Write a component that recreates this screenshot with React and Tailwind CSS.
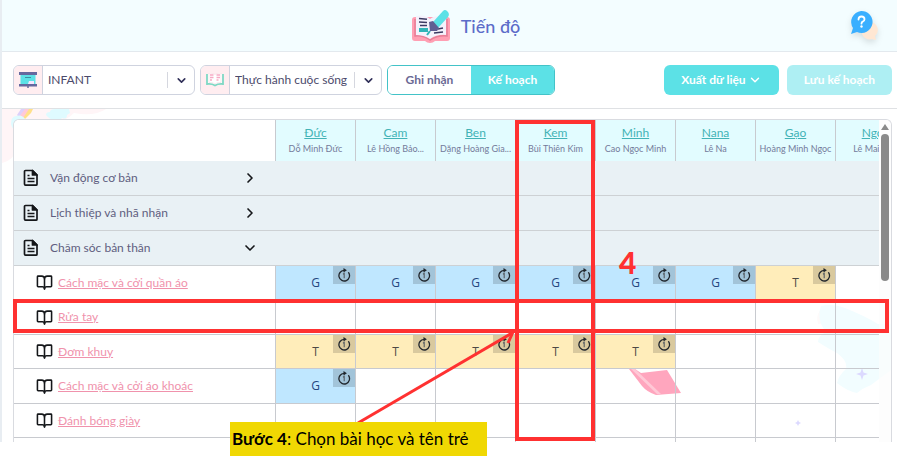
import { ChevronDown, ChevronRight, BookOpen } from "lucide-react"

const children = [
  { nick: "Đức", name: "Dỗ Minh Đức" },
  { nick: "Cam", name: "Lê Hồng Bảo..." },
  { nick: "Ben", name: "Dặng Hoàng Gia..." },
  { nick: "Kem", name: "Bùi Thiên Kim" },
  { nick: "Minh", name: "Cao Ngọc Minh" },
  { nick: "Nana", name: "Lê Na" },
  { nick: "Gạo", name: "Hoàng Minh Ngọc" },
  { nick: "Ngọc", name: "Lê Mai Anh" }
]

const groups = [
  { title: "Vận động cơ bản", open: false },
  { title: "Lịch thiệp và nhã nhặn", open: false },
  { title: "Chăm sóc bản thân", open: true }
]

const lessons = [
  { title: "Cách mặc và cởi quần áo", marks: ["G", "G", "G", "G", "G", "G", "T", ""] },
  { title: "Rửa tay", marks: ["", "", "", "", "", "", "", ""] },
  { title: "Đơm khuy", marks: ["T", "T", "T", "T", "T", "", "", ""] },
  { title: "Cách mặc và cởi áo khoác", marks: ["G", "", "", "", "", "", "", ""] },
  { title: "Đánh bóng giày", marks: ["", "", "", "", "", "", "", ""] }
]

const markColors = {
  G: "bg-[#bfe7ff] text-[#24467f]",
  T: "bg-[#ffedba] text-[#4d4a45]"
}

const LogoIcon = () => (
  <svg width="40" height="34" viewBox="0 0 40 34" aria-hidden="true">
    <path d="M1 11q0-3 3-3h32q3 0 3 3v18q0 3-3 3H24q-2 2-5 2t-5-2H4q-3 0-3-3z" fill="#ff9fb3" />
    <path d="M4 10v17q8-1 15 4 8-5 17-4V10" fill="none" stroke="#e77f98" strokeWidth="1.500" />
    <path d="M5 7q9-2 14 3v20q-6-4-14-4zM19 10q5-4 16-3v19q-9-1-16 4z" fill="#f4f2fc" />
    <path d="M8 9.500l8 .8M8 13l8 .5M9 16.500h7M27 20l5-1M23 24l9-1" stroke="#3c3b63" strokeWidth="1.500" />
    <path d="M8 19h9v4H8z" fill="#2fb5b8" />
    <path d="M22 13L32 2q2-2 4.500.5T37 8L27 19z" fill="#5ce1e6" />
    <path d="M18 13l4-1 6 7-2 3h-7z" fill="#5f5e92" />
    <path d="M19 22l-3 4" stroke="#2fb5b8" strokeWidth="2" />
  </svg>
)

const HelpIcon = () => (
  <svg width="32" height="32" viewBox="0 0 32 32" className="drop-shadow-md" aria-hidden="true">
    <path d="M20 12a8 8 0 0 1 6 14l1 4-4-1a8 8 0 0 1-10-5z" fill="#ffe7d3" />
    <path d="M12 1a11 11 0 1 1-4 21l-6 2 2-6A11 11 0 0 1 12 1z" fill="#3aafff" />
    <path d="M9.500 9.500q0-3 3-3t3 2.700q0 1.800-1.800 2.500-1.200.5-1.200 2" fill="none" stroke="#fff" strokeWidth="1.800" strokeLinecap="round" />
    <circle cx="12.500" cy="16.500" r="1.200" fill="#fff" />
  </svg>
)

const BoardIcon = () => (
  <svg width="18" height="16" viewBox="0 0 18 16" aria-hidden="true">
    <path d="M1.500 2h15v10h-15z" fill="#5ce1e6" />
    <path d="M10 9h5v3H9z" fill="#f4e6ff" />
    <path d="M6 5.500h6" stroke="#3e8fa0" />
    <path d="M0 0h18v3H0zM0 12h18v2.500H0z" fill="#65689e" />
    <path d="M9 14v2" stroke="#65689e" strokeWidth="1.500" />
  </svg>
)

const SubjectIcon = () => (
  <svg width="18" height="14" viewBox="0 0 18 14" aria-hidden="true">
    <path d="M1 1v10q5-.5 8 1.500 3-2 8-1.500V1" fill="#fff" stroke="#7fd8c4" strokeWidth="1.800" />
    <path d="M3 0q4 0 6 1.500Q11 0 15 0v9.500Q11 9 9 11 7 9 3 9.500z" fill="#fff" stroke="#f3dbe3" strokeWidth=".6" />
    <path d="M4 2h3.500M4 4.500h3.500M4 7h2M10.500 2H14M10.500 4.500H14M10.500 7h2" stroke="#f7a9c4" strokeWidth="1.400" />
  </svg>
)

const DocIcon = () => (
  <svg width="16" height="18" viewBox="0 0 16 18" fill="none" stroke="#15171a" strokeWidth="1.700" strokeLinejoin="round" aria-hidden="true">
    <path d="M9.500 1.500h-7q-1 0-1 1v12.500q0 1.200 1 1.200h10.500q1 0 1-1V6z" />
    <path d="M9.500 1.500V6H14z" fill="#15171a" />
    <path d="M4.500 6.500h2M4.500 9.500h7M4.500 12.500h7" strokeWidth="1.400" />
  </svg>
)

const RepeatBadge = () => (
  <span className="absolute right-0 top-0 flex h-[18px] w-[22px] items-center justify-center bg-black/15">
    <svg width="14" height="14" viewBox="0 0 14 14" fill="none" stroke="#20262c" aria-hidden="true">
      <path d="M7 2.400a5.300 5.300 0 1 0 4.600 2.300" strokeWidth="1.300" strokeLinecap="round" />
      <path d="M6.500 0l3.400 2.300-3.400 2.300z" fill="#20262c" stroke="none" />
      <path d="M6 6.200l1.200-.8v4.800" stroke="#555c63" strokeWidth="1.100" />
    </svg>
  </span>
)

const SelectBox = ({ id, label, value, icon }) => (
  <div className="relative flex h-[30px] w-[182px] overflow-hidden rounded-md border border-[#cfd3df] bg-white">
    <label htmlFor={id} aria-label={label} className="flex w-[29px] shrink-0 items-center justify-center border-r border-[#cfd3df] bg-[#ffedf0]">
      {icon}
    </label>
    <select id={id} className="min-w-0 flex-1 appearance-none bg-transparent pl-[5px] text-xs text-[#4b4a6b] outline-none">
      <option>{value}</option>
    </select>
    <span className="pointer-events-none absolute inset-y-1.5 right-0 flex w-[27px] items-center justify-center border-l border-[#d5d7df]">
      <ChevronDown size={13} strokeWidth={3} className="text-[#33325a]" />
    </span>
  </div>
)

const Header = () => (
  <header className="grid h-[52px] grid-cols-[1fr_auto_1fr] items-center border-b border-[#e3e9ee] bg-[#f3fdff] pl-12 pr-4">
    <span />
    <div className="flex items-center gap-2.5">
      <LogoIcon />
      <h1 className="text-lg font-medium text-[#5c6cc9]">Tiến độ</h1>
    </div>
    <button type="button" aria-label="Trợ giúp" className="justify-self-end">
      <HelpIcon />
    </button>
  </header>
)

const Toolbar = () => (
  <div className="flex h-[57px] items-center gap-[5px] border-b border-[#dfe1e4] bg-white pl-[11px] pr-[5px]">
    <SelectBox id="class" label="Lớp" value="INFANT" icon={<BoardIcon />} />
    <SelectBox id="subject" label="Lĩnh vực" value="Thực hành cuộc sống" icon={<SubjectIcon />} />
    <div className="flex h-[30px] w-[168px] overflow-hidden rounded-md border border-[#43c3c8] text-xs font-bold">
      <button type="button" className="flex-1 bg-white text-[#6a6994]">Ghi nhận</button>
      <button type="button" className="flex-1 bg-[#5ce1e6] text-white">Kế hoạch</button>
    </div>
    <div className="ml-auto flex gap-2 text-xs font-bold text-white">
      <button type="button" className="flex h-[30px] w-[115px] items-center justify-center gap-0.5 rounded-md bg-[#5ce1e6]">
        Xuất dữ liệu
        <ChevronDown size={14} strokeWidth={2.5} />
      </button>
      <button type="button" className="h-[30px] w-[105px] rounded-md bg-[#aeeff3]">Lưu kế hoạch</button>
    </div>
  </div>
)

// pale cloud and rainbow behind the top left corner of the table
const CloudArt = () => (
  <svg width="110" height="60" viewBox="0 0 110 60" className="absolute left-0 top-0" aria-hidden="true">
    <path d="M0 0h104q-12 8-32 4-8 8-24 12L12 46q-4 6-12 8z" fill="#fff5f7" />
    <path d="M15 6l4-6h6l-8 8z" fill="#dcd0fa" />
    <path d="M17 8l6-8h5l-6 9z" fill="#ffc9d8" />
    <path d="M21 9l6-9h4l-2 4-6 6z" fill="#ffe08a" />
    <path d="M9 14q0-6 5-7 6-2 9 3 4 1 2 6l-12 6q-4-4-4-8z" fill="#dffbff" />
    <path d="M44 6q0-3 4-3 0-3 5-3h14l1 4-3 2q0 5-5 3-3 5-6 1-5 2-10-4z" fill="#dffbff" />
  </svg>
)

// shapes that show through the empty cells
const TableArt = () => (
  <svg width="278" height="322" viewBox="0 0 278 322" className="absolute right-0 top-0" aria-hidden="true">
    <path d="M205 204q-4-16 14-19l6 14-10 4z" fill="#fefafa" />
    <path d="M208 186q12-3 24 2 20 8 33 16h19v42q-14 10-26 19-8 3-14 8-10-2-20-10 2-8 9-14 2-8-9-16-8-4-19-11 0-6 8-10-10-12-5-26z" fill="#f2fdff" />
    <path d="M16 249h6l6 4 26-3 14 23-25 2q-9-3-14-9z" fill="#ffa6be" />
    <path d="M18 249h4l26 25h-4z" fill="#ffc8d6" />
    <path d="M249 248l1.500 4.500 4.500 1.500-4.500 1.500-1.500 4.500-1.500-4.500-4.500-1.500 4.500-1.500zM185 300l1 2 2 1-2 1-1 2-1-2-2-1 2-1z" fill="#dcd9ff" />
  </svg>
)

const ProgressTable = () => (
  <table className="relative w-[902px] table-fixed border-separate border-spacing-0">
    <colgroup>
      <col className="w-[262px]" />
      {children.map((child) => (
        <col key={child.nick} className="w-20" />
      ))}
    </colgroup>
    <thead>
      <tr className="h-[41px]">
        <th aria-label="Bài học" className="border-r border-[#c8cacf] bg-white p-0" />
        {children.map((child) => (
          <th key={child.nick} className="whitespace-nowrap border-r border-[#c8cacf] bg-[#e2fcff] p-0 font-normal">
            <a href="#" className="block text-xs leading-4 text-[#43b3b6] underline">{child.nick}</a>
            <span className="block text-[9px] leading-4 text-[#747b9b]">{child.name}</span>
          </th>
        ))}
      </tr>
    </thead>
    <tbody>
      {groups.map((group) => (
        <tr key={group.title} className="h-[35px] bg-[#e9f1f5]">
          <td className="border-b border-[#cdd1d4] p-0">
            <button type="button" aria-expanded={group.open} className="flex w-full items-center pl-[9px] pr-[18px] text-xs text-[#5f5e80]">
              <DocIcon />
              <span className="ml-[11px] flex-1 text-left">{group.title}</span>
              {group.open ? (
                <ChevronDown size={16} strokeWidth={2.5} className="text-[#15171a]" />
              ) : (
                <ChevronRight size={16} strokeWidth={2.5} className="text-[#15171a]" />
              )}
            </button>
          </td>
          <td colSpan={children.length} className="border-b border-[#cdd1d4] p-0" />
        </tr>
      ))}
    </tbody>
    <tbody>
      {lessons.map((lesson) => (
        <tr key={lesson.title} className="odd:h-[34px] even:h-[35px]">
          <td className="border-b border-r border-[#c8cacf] bg-white p-0">
            <div className="flex items-center gap-[5px] pl-[22px]">
              <BookOpen size={17} strokeWidth={2.2} className="text-[#15171a]" />
              <a href="#" className="text-xs text-[#f092ac] underline">{lesson.title}</a>
            </div>
          </td>
          {lesson.marks.map((mark, i) => (
            <td key={i} className={`relative border-b border-r border-[#c8cacf] p-0 text-center font-['Open_Sans',sans-serif] text-xs ${markColors[mark] || ""}`}>
              {mark}
              {mark && <RepeatBadge />}
            </td>
          ))}
        </tr>
      ))}
      <tr className="h-1">
        <td className="border-r border-[#c8cacf] bg-white p-0" />
        {children.map((child) => (
          <td key={child.nick} className="border-r border-[#c8cacf] p-0" />
        ))}
      </tr>
    </tbody>
  </table>
)

const ScrollBar = () => (
  <div className="relative flex w-3 shrink-0 flex-col items-center gap-1 bg-[#fcfcfc]/70 pt-1">
    <svg width="8" height="6" viewBox="0 0 8 6" aria-hidden="true">
      <path d="M4 0l4 6H0z" fill="#8a8a8a" />
    </svg>
    <div className="h-[147px] w-2 rounded-full bg-[#8a8a8a]" />
  </div>
)

// guide marks drawn on top of the table
const Guide = () => (
  <>
    <div className="pointer-events-none absolute left-[502px] top-px h-[321px] w-20 border-4 border-[#ff3131]" />
    <div className="pointer-events-none absolute left-0 right-[3px] top-[180px] h-[34px] border-4 border-[#ff3131]" />
    <svg width="170" height="100" viewBox="0 0 170 100" className="pointer-events-none absolute left-[340px] top-[208px]" fill="none" stroke="#ff3131" strokeWidth="3" aria-hidden="true">
      <path d="M5 96L159 6" />
      <path d="M149 4l11 1-5 11" strokeLinejoin="round" />
    </svg>
    <span className="absolute left-[606px] top-[127px] text-3xl font-black leading-8 text-[#ff3131]">4</span>
    <p className="absolute left-[217px] top-[303px] flex h-[34px] w-[257px] items-center whitespace-pre bg-[#f0d803] px-0.5 text-[17px] text-black">
      <strong className="font-bold">Bước 4</strong>: Chọn bài học và tên trẻ
    </p>
  </>
)

const App = () => {
  return (
    <div className="bg-white pb-5 font-['Lato','Noto_Sans',sans-serif]">
      <div className="border-l-2 border-[#e8edf2]">
        <Header />
        <Toolbar />
        <main className="relative pl-[11px] pr-[5px] pt-2.5">
          <CloudArt />
          <div className="relative">
            <div className="relative flex overflow-hidden rounded-t-md border-x border-t border-[#d9dbe0] bg-white">
              <TableArt />
              <div className="relative min-w-0 flex-1 overflow-hidden">
                <ProgressTable />
              </div>
              <ScrollBar />
            </div>
            <Guide />
          </div>
        </main>
      </div>
    </div>
  )
}

export default App
